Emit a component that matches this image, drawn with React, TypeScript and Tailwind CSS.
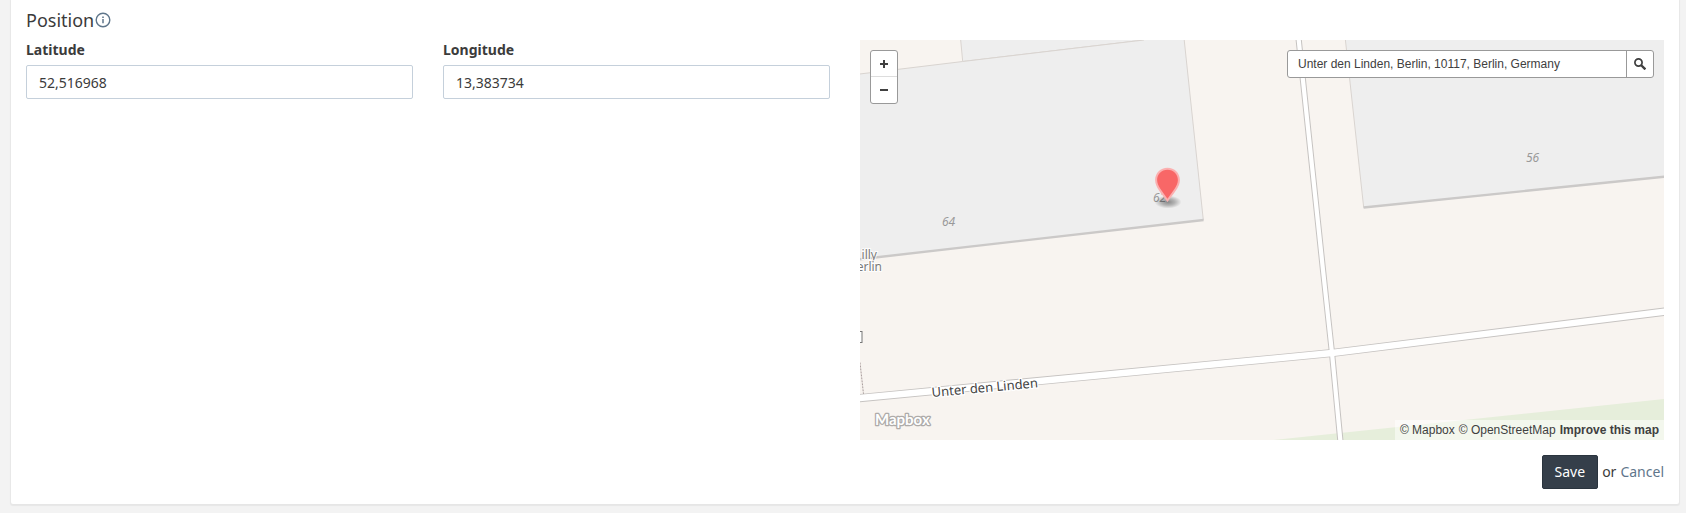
import { useState } from "react";

type FieldProps = { id: string; label: string; initial: string };

function Field({ id, label, initial }: FieldProps) {
  const [value, setValue] = useState(initial);
  return (
    <div className="flex flex-col">
      <label htmlFor={id} className="h-[25px] text-sm leading-5 font-bold">
        {label}
      </label>
      <input
        id={id}
        type="text"
        value={value}
        onChange={(e) => setValue(e.target.value)}
        className="h-[34px] w-full rounded-xs border border-[#c5d0db] bg-white px-3 text-sm"
      />
    </div>
  );
}

function InfoIcon() {
  return (
    <svg viewBox="0 0 16 16" className="size-4" fill="none" stroke="#5f768b" aria-hidden="true">
      <circle cx="8" cy="8" r="6.8" strokeWidth="1.4" />
      <path d="M8 7v4.3" strokeWidth="1.5" />
      <path d="M8 4.5v1.5" strokeWidth="1.6" />
    </svg>
  );
}

function MapTiles() {
  return (
    <svg
      viewBox="0 0 804 400"
      preserveAspectRatio="xMidYMid slice"
      className="block h-full w-full bg-[#f8f4f0]"
      aria-hidden="true"
    >
      <defs>
        <radialGradient id="pin-shadow">
          <stop offset="0" stopColor="#000" stopOpacity="0.42" />
          <stop offset="0.5" stopColor="#000" stopOpacity="0.25" />
          <stop offset="1" stopColor="#000" stopOpacity="0" />
        </radialGradient>
      </defs>

      {/* park */}
      <path d="M404 401 804 359V401Z" fill="#e6eedb" />

      {/* buildings */}
      <g fill="#eeeeee" stroke="#d9d4d0" strokeWidth="1">
        <path d="M100.5 -2 102.7 21.5 284 0V-2Z" />
        <path d="M-2 34.2 102.7 21.5 284 0 324 -2 343.5 180 -2 219Z" stroke="none" />
        <path d="M-2 34.2 102.7 21.5 284 0" fill="none" />
        <path d="M324 -2 343.3 180" fill="none" />
        <path d="M485.2 -2 503.7 167.5 806 136.5V-2Z" />
      </g>
      <g fill="none" stroke="#cbc9c8" strokeWidth="2.4">
        <path d="M-2 219.4 343.6 180" />
        <path d="M503.6 167.5 806 136.5" />
      </g>

      {/* footpath */}
      <path d="M0 322.5 3.5 354" stroke="#a89c9c" strokeWidth="1" strokeDasharray="2 1" />

      {/* roads */}
      <g fill="none" stroke="#c6c3c1">
        <path d="M-2 358.2 410 319 472 313 806 271.5" strokeWidth="8.2" />
        <path d="M438.5 -2 463 230 472 313 480.5 402" strokeWidth="6.2" />
      </g>
      <g fill="none" stroke="#fff">
        <path d="M-2 358.2 410 319 472 313 806 271.5" strokeWidth="6.4" />
        <path d="M438.5 -2 463 230 472 313 480.5 402" strokeWidth="4.2" />
      </g>

      {/* clipped poi icon */}
      <rect x="-9" y="291.5" width="11" height="11" fill="#fff" stroke="#777" />

      <g fontFamily="'Noto Sans', sans-serif">
        <g fontSize="12" fontStyle="italic" fill="#999">
          <text x="82" y="186">64</text>
          <text x="293" y="162">62</text>
          <text x="666" y="122">56</text>
        </g>
        <text fontSize="12" fill="#7a7a7a" stroke="#fff" strokeOpacity="0.85" strokeWidth="2" paintOrder="stroke" textAnchor="end">
          <tspan x="17" y="219">illy</tspan>
          <tspan x="22" y="231">erlin</tspan>
        </text>
        <text
          transform="translate(72 357) rotate(-5.2)"
          fontSize="13"
          fill="#444"
          stroke="#fff"
          strokeWidth="2.4"
          paintOrder="stroke"
        >
          Unter den Linden
        </text>
      </g>

      {/* marker */}
      <ellipse cx="308" cy="162" rx="13.5" ry="6.5" fill="url(#pin-shadow)" />
      <path
        d="M307.5 127.8c-7 0-12.4 5.4-12.4 12.2 0 7.4 6.5 13.5 12.4 22 5.9-8.5 12.4-14.6 12.4-22 0-6.8-5.4-12.2-12.4-12.2Z"
        fill="#fbb0b0"
      />
      <path
        d="M307.5 129.8c-6 0-10.4 4.6-10.4 10.2 0 6.3 5.6 11.5 10.4 18.8 4.8-7.3 10.4-12.5 10.4-18.8 0-5.6-4.4-10.2-10.4-10.2Z"
        fill="#f86767"
      />
    </svg>
  );
}

function MapPanel() {
  const [query, setQuery] = useState("Unter den Linden, Berlin, 10117, Berlin, Germany");
  return (
    <div className="relative col-span-2 h-[400px] overflow-hidden font-['Liberation_Sans',sans-serif] text-xs text-[#404040]">
      <MapTiles />

      <div className="absolute top-[10px] left-[10px] flex w-7 flex-col overflow-hidden rounded-[3px] border border-[#999] bg-white">
        <button type="button" aria-label="Zoom in" className="flex h-[26px] items-center justify-center border-b border-[#ddd]">
          <svg viewBox="0 0 8 8" className="size-2" aria-hidden="true">
            <path d="M0 4h8M4 0v8" stroke="#404040" strokeWidth="2" />
          </svg>
        </button>
        <button type="button" aria-label="Zoom out" className="flex h-[26px] items-center justify-center">
          <svg viewBox="0 0 8 8" className="size-2" aria-hidden="true">
            <path d="M0 4h8" stroke="#404040" strokeWidth="2" />
          </svg>
        </button>
      </div>

      <form
        onSubmit={(e) => e.preventDefault()}
        className="absolute top-[10px] right-[10px] flex h-7 w-[367px] overflow-hidden rounded-[3px] border border-[#999] bg-white"
      >
        <input
          type="text"
          aria-label="Search address"
          value={query}
          onChange={(e) => setQuery(e.target.value)}
          className="min-w-0 flex-1 px-[10px]"
        />
        <button type="submit" aria-label="Search" className="flex w-[27px] items-center justify-center border-l border-[#999]">
          <svg viewBox="0 0 12 12" className="size-3" fill="none" stroke="#404040" aria-hidden="true">
            <circle cx="4.5" cy="4.5" r="3.6" strokeWidth="1.7" />
            <path d="M7 7l4.4 4.4" strokeWidth="2.4" />
          </svg>
        </button>
      </form>

      <a href="#mapbox" aria-label="Mapbox" className="absolute bottom-2 left-3">
        <svg viewBox="0 0 60 24" className="h-6 w-[60px]" aria-hidden="true">
          <text
            x="3"
            y="17"
            fontFamily="Lato, sans-serif"
            fontWeight="700"
            fontSize="15"
            fill="#fff"
            stroke="#aeaba9"
            strokeWidth="2.6"
            strokeLinejoin="round"
            paintOrder="stroke"
          >
            Mapbox
          </text>
        </svg>
      </a>

      <div className="absolute right-0 bottom-0 flex h-5 items-center gap-1 bg-white/50 px-[5px] whitespace-nowrap">
        <a href="#about-mapbox">© Mapbox</a>
        <a href="#openstreetmap">© OpenStreetMap</a>
        <a href="#improve" className="font-bold">Improve this map</a>
      </div>
    </div>
  );
}

export default function App() {
  return (
    <div className="min-h-screen bg-[#f3f3f3] pr-[7px] pb-2 pl-[11px] font-['Noto_Sans',sans-serif] text-[#3b3b3b]">
      <section className="rounded-b-xs bg-white px-[15px] pb-[15px] shadow-[0_1px_1px_1px_rgba(0,0,0,0.05)]">
        <h2 className="flex h-10 items-center gap-px text-lg">
          Position
          <button type="button" aria-label="About position">
            <InfoIcon />
          </button>
        </h2>
        <div className="grid grid-cols-4 gap-[30px]">
          <Field id="latitude" label="Latitude" initial="52,516968" />
          <Field id="longitude" label="Longitude" initial="13,383734" />
          <MapPanel />
        </div>
        <div className="mt-[15px] flex items-center justify-end gap-1 text-sm">
          <button
            type="submit"
            className="h-[34px] rounded-xs border border-[#2a343e] bg-[#353f4a] px-3 text-white"
          >
            Save
          </button>
          <span>or</span>
          <a href="#cancel" className="text-[#5f768b]">Cancel</a>
        </div>
      </section>
    </div>
  );
}
